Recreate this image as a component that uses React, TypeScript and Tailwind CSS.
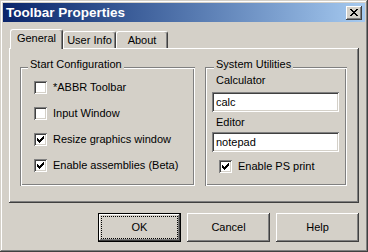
import React from "react";

// Win2000-style bevels, drawn with inset shadows so they take no layout space
const raised =
  "shadow-[inset_-1px_-1px_#404040,inset_1px_1px_#ffffff,inset_-2px_-2px_#808080,inset_2px_2px_#d4d0c8]";
const sunken =
  "shadow-[inset_1px_1px_#808080,inset_-1px_-1px_#ffffff,inset_2px_2px_#404040,inset_-2px_-2px_#d4d0c8]";
const etched =
  "shadow-[inset_1px_1px_#808080,inset_-1px_-1px_#ffffff,inset_2px_2px_#ffffff,inset_-2px_-2px_#808080]";

const checkTops = [2, 3, 4, 3, 2, 1, 0];

function CheckBox({ checked }: { checked?: boolean }) {
  return (
    <span className={`flex h-[13px] w-[13px] shrink-0 items-center justify-center bg-white ${sunken}`}>
      {checked && (
        <svg width="7" height="7" viewBox="0 0 7 7" shapeRendering="crispEdges">
          {checkTops.map((y, x) => (
            <rect key={x} x={x} y={y} width="1" height="3" fill="#000" />
          ))}
        </svg>
      )}
    </span>
  );
}

function CloseGlyph() {
  const rows = [
    [0, 2, 6, 2],
    [1, 2, 5, 2],
    [2, 4],
    [3, 2],
    [2, 4],
    [1, 2, 5, 2],
    [0, 2, 6, 2],
  ];
  return (
    <svg width="8" height="7" viewBox="0 0 8 7" shapeRendering="crispEdges">
      {rows.map((r, y) => (
        <g key={y}>
          <rect x={r[0]} y={y} width={r[1]} height="1" fill="#000" />
          {r.length > 2 && <rect x={r[2]} y={y} width={r[3]} height="1" fill="#000" />}
        </g>
      ))}
    </svg>
  );
}

function Option({ label, checked }: { label: string; checked?: boolean }) {
  return (
    <div className="flex items-center gap-[6px]">
      <CheckBox checked={checked} />
      <span className="-mt-[1px]">{label}</span>
    </div>
  );
}

function Field({ value }: { value: string }) {
  return (
    <div className={`flex h-[20px] w-[127px] items-center bg-white pl-[4px] ${sunken}`}>{value}</div>
  );
}

function Button({ label, isDefault }: { label: string; isDefault?: boolean }) {
  if (isDefault) {
    return (
      <button className={`flex h-[29px] w-[83px] border border-black p-[2px] ${raised}`}>
        <span className="flex flex-1 items-center justify-center border border-dotted border-black">
          {label}
        </span>
      </button>
    );
  }
  return (
    <button className={`flex h-[29px] w-[83px] items-center justify-center ${raised}`}>{label}</button>
  );
}

export default function App() {
  return (
    <div
      className="flex h-[252px] w-[368px] flex-col bg-[#d4d0c8] p-[3px] font-['Liberation_Sans',Arial,sans-serif] text-[11px] leading-[13px] text-black shadow-[inset_-1px_-1px_#404040,inset_1px_1px_#d4d0c8,inset_-2px_-2px_#808080,inset_2px_2px_#ffffff]"
    >
      {/* title bar */}
      <div className="flex h-[19px] items-center justify-between bg-linear-to-r from-[#0a246a] to-[#a6caf0] pl-[3px] pr-[3px]">
        <span className="text-[13.5px] font-bold leading-[16px] text-white">Toolbar Properties</span>
        <button className={`flex h-[14px] w-[16px] items-center justify-center bg-[#d4d0c8] ${raised}`}>
          <CloseGlyph />
        </button>
      </div>

      <div className="flex flex-col px-[6px]">
        {/* tabs */}
        <div className="mt-[7px] flex h-[19px] items-end pl-[1px]">
          <div className="relative z-10 -mb-[1px] flex h-[20px] w-[53px] justify-center rounded-t-[3px] border-l border-t border-r border-white border-r-[#404040] bg-[#d4d0c8] pt-[2px] shadow-[inset_-1px_0_#808080]">
            General
          </div>
          <div className="flex h-[17px] w-[53px] justify-center rounded-t-[3px] border-l border-t border-r border-white border-r-[#404040] pt-[2px] shadow-[inset_-1px_0_#808080]">
            User Info
          </div>
          <div className="flex h-[17px] w-[52px] justify-center rounded-t-[3px] border-l border-t border-r border-white border-r-[#404040] pt-[2px] shadow-[inset_-1px_0_#808080]">
            About
          </div>
        </div>

        {/* tab panel */}
        <div className={`flex h-[155px] gap-[10px] pl-[11px] pt-[19px] ${raised}`}>
          <div className={`relative flex h-[119px] w-[175px] flex-col gap-[13px] pl-[14px] pt-[14px] ${etched}`}>
            <span className="absolute -top-[9px] left-[8px] bg-[#d4d0c8] px-[2px]">Start Configuration</span>
            <Option label="*ABBR Toolbar" />
            <Option label="Input Window" />
            <Option label="Resize graphics window" checked />
            <Option label="Enable assemblies (Beta)" checked />
          </div>

          <div className={`relative flex h-[119px] w-[142px] flex-col pl-[7px] pt-[7px] ${etched}`}>
            <span className="absolute -top-[9px] left-[9px] bg-[#d4d0c8] px-[2px]">System Utilities</span>
            <span className="pl-[4px]">Calculator</span>
            <div className="mt-[5px]">
              <Field value="calc" />
            </div>
            <span className="mt-[4px] pl-[4px]">Editor</span>
            <div className="mt-[3px]">
              <Field value="notepad" />
            </div>
            <div className="ml-[7px] mt-[8px]">
              <Option label="Enable PS print" checked />
            </div>
          </div>
        </div>

        {/* buttons */}
        <div className="mt-[10px] flex justify-end gap-[6px]">
          <Button label="OK" isDefault />
          <Button label="Cancel" />
          <Button label="Help" />
        </div>
      </div>
    </div>
  );
}
